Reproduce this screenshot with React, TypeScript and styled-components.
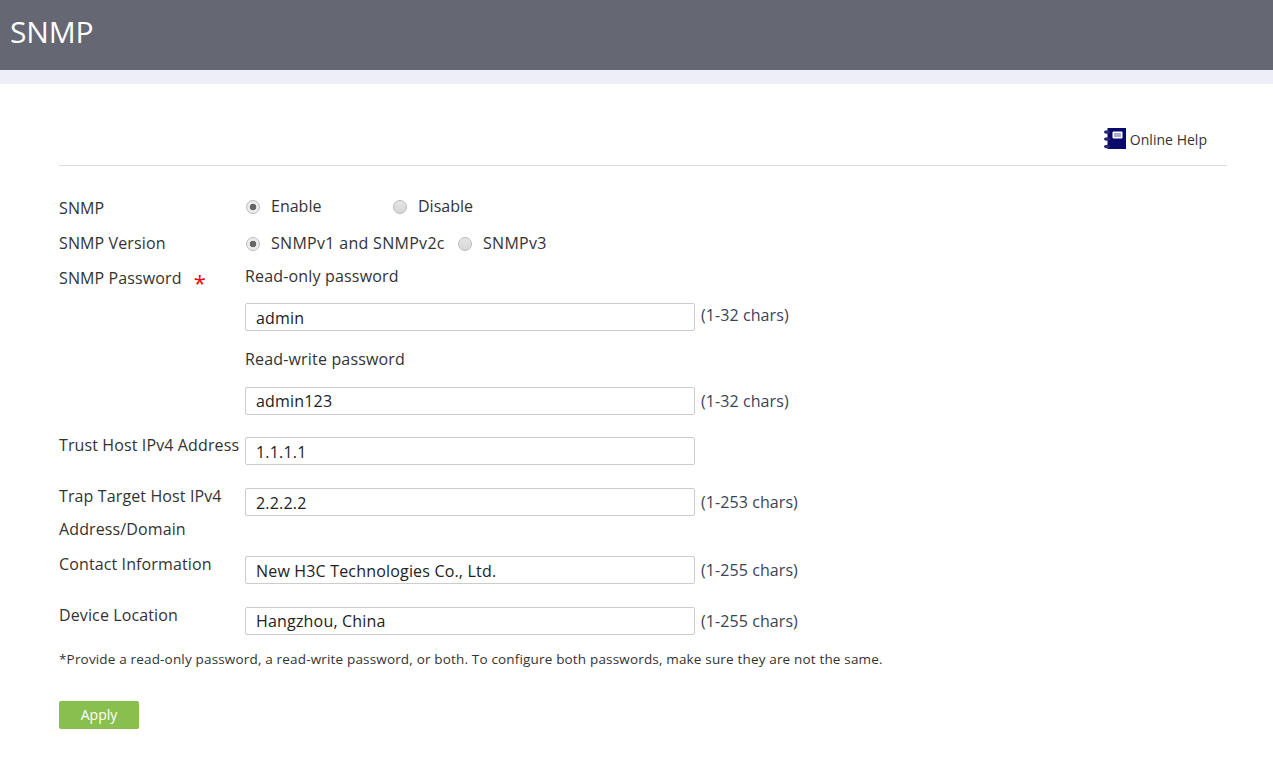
import React from 'react';
import styled, { createGlobalStyle } from 'styled-components';

const Global = createGlobalStyle`
  html, body { margin: 0; padding: 0; background: #fff; }
  body { font-family: "Open Sans", "Noto Sans", sans-serif; color: #333; overflow: hidden; }
`;
const Header = styled.header`
  height: 70px; background: #656773; border-bottom: 14px solid #eeeef8; display: flex; align-items: center;
  padding-left: 10px; box-sizing: content-box;
`;
const Title = styled.h1`
  margin: 0 0 6px; font-size: 30px; font-weight: 400; color: #fff; line-height: 38px; letter-spacing: -0.2px;
`;
const Content = styled.main`
  padding: 0 46px 0 59px;
`;
const HelpBar = styled.div`
  height: 82px; border-bottom: 1px solid #ddd; display: flex; justify-content: flex-end; align-items: flex-end;
  padding: 0 20px 14px 0; box-sizing: border-box; gap: 4px;
`;
const HelpGlyph = styled.svg`
  margin-bottom: 1px;
`;
const HelpText = styled.a`
  font-size: 14px; color: #333; line-height: 22px; letter-spacing: 0.02px;
`;
const Form = styled.form`
  display: block; padding-top: 22px;
`;
const Row = styled.div<{ $h: number }>`
  display: grid; grid-template-columns: 186px 1fr; height: ${p => p.$h}px;
`;
const Label = styled.div<{ $top?: number }>`
  font-size: 16px; line-height: 33px; padding-top: ${p => p.$top ?? 0}px; letter-spacing: 0.12px; white-space: nowrap; color: #333;
`;
const Star = styled.span`
  color: #f00; margin-left: 12px; font-size: 22px; line-height: 1; position: relative; top: 7px;
`;
const Options = styled.div`
  display: flex; align-items: center; height: 36px;
`;
const Option = styled.label<{ $w?: number; $ls?: number }>`
  display: flex; align-items: center; font-size: 16px; letter-spacing: ${p => p.$ls ?? 0.3}px; width: ${p => (p.$w ? `${p.$w}px` : 'auto')}; white-space: nowrap;
`;
const Radio = styled.span<{ $on?: boolean; $drop?: number }>`
  width: 14px; height: 14px; border-radius: 50%; box-sizing: border-box; border: 1px solid #bbb; margin: ${p => p.$drop ?? 1}px 11px 0 1px;
  background: ${p => (p.$on ? 'radial-gradient(circle, #666 0 3px, #ececec 3.6px)' : 'linear-gradient(#e6e6e6, #d6d6d6)')};
  flex: none;
`;
const PasswordBox = styled.div`
  padding-top: 3px;
`;
const SubLabel = styled.div<{ $h: number; $pad?: number }>`
  font-size: 16px; letter-spacing: 0.17px; height: ${p => p.$h}px; line-height: 24px; padding-top: ${p => p.$pad ?? 0}px; box-sizing: border-box;
`;
const Field = styled.div<{ $pad?: number }>`
  display: flex; align-items: flex-start; gap: 6px; padding-top: ${p => p.$pad ?? 0}px;
`;
const Input = styled.input<{ $raised?: boolean }>`
  width: 450px; height: 28px; box-sizing: border-box; border: 1px solid #ccc; border-radius: 2px; padding: ${p => (p.$raised ? 0 : 2)}px 10px 0;
  font: 16px "Open Sans", "Noto Sans", sans-serif; letter-spacing: 0.18px; color: #222; outline: none; background: #fff;
`;
const Hint = styled.span<{ $up?: number }>`
  font-size: 16px; letter-spacing: 0.08px; color: #3a4456; line-height: 28px; margin-top: -${p => p.$up ?? 0}px;
`;
const Note = styled.p`
  margin: 0; font-size: 13.5px; line-height: 20px; letter-spacing: 0.17px; color: #333; white-space: nowrap;
`;
const Apply = styled.button`
  display: block; margin-top: 32px; width: 80px; height: 28px; border: 0; border-radius: 2px; background: #88bf4f; color: #fff;
  font: 14px "Open Sans", "Noto Sans", sans-serif; padding: 0 0 2px;
`;

function HelpIcon() {
  return (
    <HelpGlyph width="22" height="22" viewBox="0 0 22 22">
      <rect x="3.5" y="0" width="18.5" height="21" fill="#0a0a6b" />
      <rect x="8.5" y="3.5" width="10" height="7" rx="1" fill="#fff" />
      <rect x="10" y="5" width="7" height="4" fill="#a9adcf" />
      {[4, 11, 18.5].map(y => <ellipse key={y} cx="3" cy={y} rx="3" ry="1.8" fill="#2a2a70" />)}
    </HelpGlyph>
  );
}

export default function App() {
  return (
    <>
      <Global />
      <Header><Title>SNMP</Title></Header>
      <Content>
        <HelpBar><HelpIcon /><HelpText>Online Help</HelpText></HelpBar>
        <Form onSubmit={e => e.preventDefault()}>
          <Row $h={37}>
            <Label $top={4}>SNMP</Label>
            <Options>
              <Option $w={147} $ls={0}><Radio $on $drop={2} />Enable</Option>
              <Option $ls={0}><Radio $drop={2} />Disable</Option>
            </Options>
          </Row>
          <Row $h={36}>
            <Label $top={2}>SNMP Version</Label>
            <Options>
              <Option $w={212}><Radio $on />SNMPv1 and SNMPv2c</Option>
              <Option><Radio />SNMPv3</Option>
            </Options>
          </Row>
          <Row $h={168}>
            <Label $top={1}>SNMP Password<Star>*</Star></Label>
            <PasswordBox>
              <SubLabel $h={39}>Read-only password</SubLabel>
              <Field><Input defaultValue="admin" /><Hint $up={2}>(1-32 chars)</Hint></Field>
              <SubLabel $h={56} $pad={16}>Read-write password</SubLabel>
              <Field><Input $raised defaultValue="admin123" /><Hint>(1-32 chars)</Hint></Field>
            </PasswordBox>
          </Row>
          <Row $h={51}>
            <Label>Trust Host IPv4 Address</Label>
            <Field $pad={8}><Input defaultValue="1.1.1.1" /></Field>
          </Row>
          <Row $h={68}>
            <Label>Trap Target Host IPv4 <br />Address/Domain</Label>
            <Field $pad={8}><Input defaultValue="2.2.2.2" /><Hint>(1-253 chars)</Hint></Field>
          </Row>
          <Row $h={51}>
            <Label>Contact Information</Label>
            <Field $pad={8}><Input defaultValue="New H3C Technologies Co., Ltd." /><Hint>(1-255 chars)</Hint></Field>
          </Row>
          <Row $h={50}>
            <Label>Device Location</Label>
            <Field $pad={8}><Input $raised defaultValue="Hangzhou, China" /><Hint>(1-255 chars)</Hint></Field>
          </Row>
          <Note>*Provide a read-only password, a read-write password, or both. To configure both passwords, make sure they are not the same.</Note>
          <Apply type="button">Apply</Apply>
        </Form>
      </Content>
    </>
  );
}
